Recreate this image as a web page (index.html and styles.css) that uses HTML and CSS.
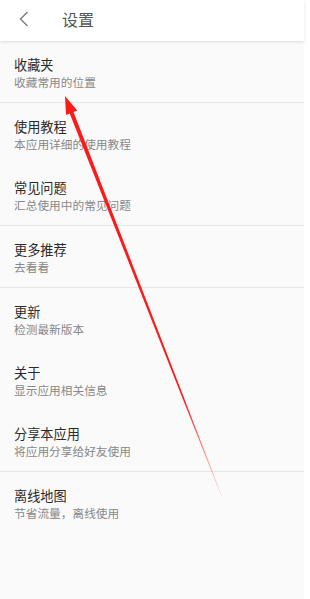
FILE: index.html
```html
<!DOCTYPE html>
<html lang="zh-CN">
<head>
  <meta charset="UTF-8">
  <meta name="viewport" content="width=device-width, initial-scale=1.0">
  <title>设置</title>
  <link rel="stylesheet" href="styles.css">
</head>
<body>
  <div class="app">
    <div class="header">
      <svg class="back" width="10" height="16" viewBox="0 0 10 16">
        <path d="M8.5 1 L1.5 8 L8.5 15" fill="none" stroke="#777" stroke-width="1.3"/>
      </svg>
      <div class="header-title">设置</div>
    </div>

    <div class="list">
      <div class="group">
        <div class="item">
          <div class="item-title">收藏夹</div>
          <div class="item-sub">收藏常用的位置</div>
        </div>
      </div>
      <div class="group">
        <div class="item">
          <div class="item-title">使用教程</div>
          <div class="item-sub">本应用详细的使用教程</div>
        </div>
        <div class="item">
          <div class="item-title">常见问题</div>
          <div class="item-sub">汇总使用中的常见问题</div>
        </div>
      </div>
      <div class="group">
        <div class="item">
          <div class="item-title">更多推荐</div>
          <div class="item-sub">去看看</div>
        </div>
      </div>
      <div class="group">
        <div class="item">
          <div class="item-title">更新</div>
          <div class="item-sub">检测最新版本</div>
        </div>
        <div class="item">
          <div class="item-title">关于</div>
          <div class="item-sub">显示应用相关信息</div>
        </div>
        <div class="item">
          <div class="item-title">分享本应用</div>
          <div class="item-sub">将应用分享给好友使用</div>
        </div>
      </div>
      <div class="group last">
        <div class="item">
          <div class="item-title">离线地图</div>
          <div class="item-sub">节省流量，离线使用</div>
        </div>
      </div>
    </div>
  </div>

  <!-- annotation arrow drawn over the screenshot -->
  <svg class="arrow" width="310" height="599" viewBox="0 0 310 599">
    <defs>
      <linearGradient id="fade" x1="65" y1="96" x2="222" y2="497" gradientUnits="userSpaceOnUse">
        <stop offset="0" stop-color="#ff1a1a"/>
        <stop offset="0.75" stop-color="#ff1a1a"/>
        <stop offset="1" stop-color="#ff1a1a" stop-opacity="0.1"/>
      </linearGradient>
    </defs>
    <polygon points="65,96 77.2,110.5 73.5,112 222.3,496.8 221.7,497.2 69.7,113.4 66,114.9" fill="url(#fade)"/>
  </svg>
</body>
</html>
```

FILE: styles.css
```css
body {
  margin: 0;
  background-color: #fff;
  font-family: "Noto Sans CJK SC", "Noto Sans", sans-serif;
  position: relative;
  width: 310px;
  height: 599px;
  overflow: hidden;
}

.app {
  width: 304px;
  height: 599px;
  background-color: #fafafa;
}

.header {
  height: 41px;
  background-color: #fff;
  display: flex;
  align-items: center;
  box-shadow: 0 1px 3px rgba(0, 0, 0, 0.12);
  position: relative;
}

.back {
  margin-left: 19px;
  margin-top: -3px;
}

.header-title {
  margin-left: 33px;
  margin-top: -3px;
  font-size: 16px;
  color: #555;
}

.group {
  border-bottom: 1px solid #e6e6e6;
}

.group.last {
  border-bottom: 0;
}

.item {
  height: 61px;
  box-sizing: border-box;
  padding: 15px 14px 0;
}

.item-title {
  font-size: 13.2px;
  line-height: 18px;
  color: #2a2a2a;
}

.item-sub {
  font-size: 11.7px;
  line-height: 16px;
  color: #888;
}

.arrow {
  position: absolute;
  left: 0;
  top: 0;
  pointer-events: none;
}
```
